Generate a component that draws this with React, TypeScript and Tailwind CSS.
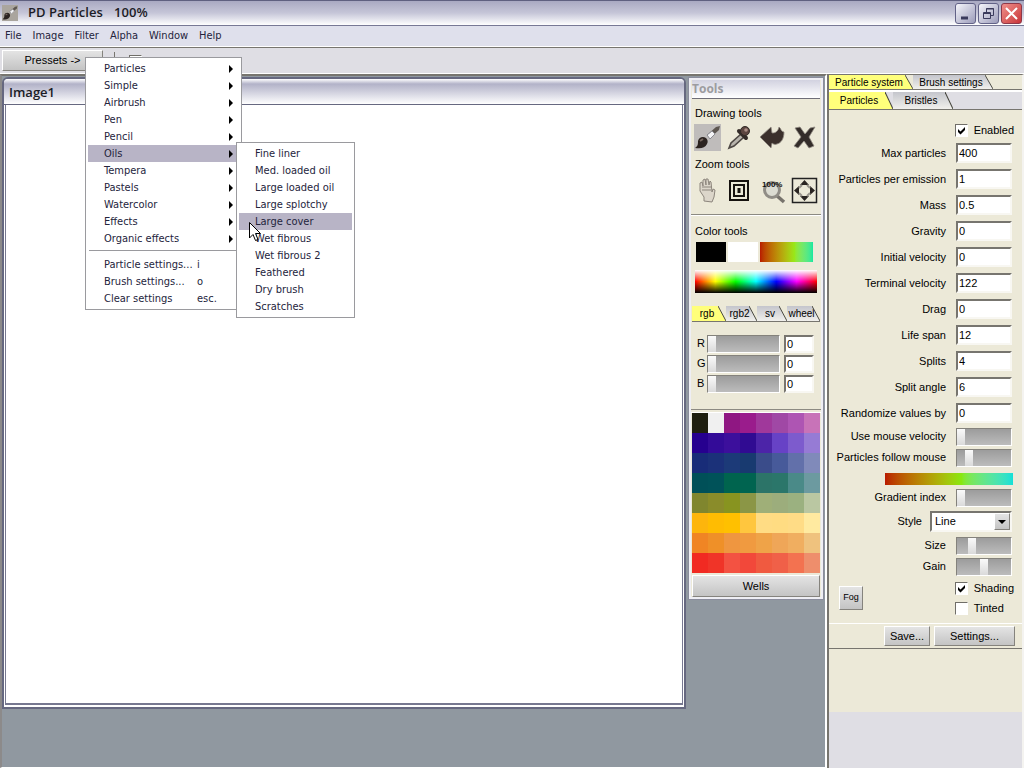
import type { ReactNode } from "react";

type PresetItem = { label: string; active?: boolean };

const presets: PresetItem[] = [
  { label: "Particles" },
  { label: "Simple" },
  { label: "Airbrush" },
  { label: "Pen" },
  { label: "Pencil" },
  { label: "Oils", active: true },
  { label: "Tempera" },
  { label: "Pastels" },
  { label: "Watercolor" },
  { label: "Effects" },
  { label: "Organic effects" },
];

const commands = [
  { label: "Particle settings...", shortcut: "i" },
  { label: "Brush settings...", shortcut: "o" },
  { label: "Clear settings", shortcut: "esc." },
];

const oils: PresetItem[] = [
  { label: "Fine liner" },
  { label: "Med. loaded oil" },
  { label: "Large loaded oil" },
  { label: "Large splotchy" },
  { label: "Large cover", active: true },
  { label: "Wet fibrous" },
  { label: "Wet fibrous 2" },
  { label: "Feathered" },
  { label: "Dry brush" },
  { label: "Scratches" },
];

const wells = [
  ["#1f1f10", "#f0f0f0", "#8f1782", "#9a1c8c", "#a0389b", "#a048a5", "#ae55b3", "#c873b8"],
  ["#26008f", "#330b98", "#3c0f9c", "#300b92", "#4c24a8", "#6742c6", "#7d5bcd", "#967bd5"],
  ["#182c78", "#1b3179", "#1c3a78", "#183a70", "#3a4c8a", "#475a9a", "#6270aa", "#808aba"],
  ["#005058", "#005259", "#00644e", "#006450", "#2c7468", "#2b766a", "#4a8a88", "#6c9aa0"],
  ["#80862e", "#8a8c2a", "#889420", "#8b9646", "#9faf78", "#9cad7c", "#9bb180", "#bac7a2"],
  ["#fdb50c", "#ffbc02", "#ffc000", "#ffc63e", "#ffdc84", "#ffdc82", "#ffdc86", "#ffeaa0"],
  ["#f08524", "#ef9028", "#ef9640", "#f09a40", "#efa348", "#efa658", "#f0ae60", "#efc27e"],
  ["#f12a22", "#f03428", "#f35242", "#f2483a", "#f05a40", "#f06048", "#f37250", "#ee8e6c"],
];

const fields = [
  { label: "Max particles", value: "400" },
  { label: "Particles per emission", value: "1" },
  { label: "Mass", value: "0.5" },
  { label: "Gravity", value: "0" },
  { label: "Initial velocity", value: "0" },
  { label: "Terminal velocity", value: "122" },
  { label: "Drag", value: "0" },
  { label: "Life span", value: "12" },
  { label: "Splits", value: "4" },
  { label: "Split angle", value: "6" },
  { label: "Randomize values by", value: "0" },
];

function Brush() {
  return (
    <svg viewBox="0 0 27 27" className="size-full">
      <path d="M26 2 L22 3 L13 11 L16 14 L25 6 Z" fill="#5d5650" />
      <path d="M18 7 L13 11 L16 15 L21 10 Z" fill="#f4f4f6" stroke="#8a8a90" />
      <path d="M12 14 C9 12 5 13 4 17 C4 20 4 22 1 24 C7 25 11 24 13 20 C14 18 14 16 12 14 Z" fill="#2b2320" />
      <path d="M6 17 L9 15" stroke="#75665e" strokeWidth="2" />
    </svg>
  );
}

function Dropper() {
  return (
    <svg viewBox="0 0 27 27" className="size-full">
      <path d="M15 10 L5 19 L3 24 L8 22 L18 13 Z" fill="#b8b4ac" stroke="#4e4844" strokeWidth="1.6" />
      <path d="M13 7 L20 14" stroke="#332b28" strokeWidth="4" strokeLinecap="round" />
      <circle cx="19" cy="7" r="4.5" fill="#5c4540" stroke="#332b28" />
      <circle cx="20" cy="6" r="1.8" fill="#ab8e86" />
    </svg>
  );
}

function Undo() {
  return (
    <svg viewBox="0 0 27 27" className="size-full">
      <path d="M1 13 L12 3 L13 9 C17 9 19 7 20 3 C22 4 22 8 25 8 C25 15 22 19 18 20 C16 21 14 20 13 19 L12 24 Z" fill="#3b302c" stroke="#8f8981" strokeWidth="0.8" />
    </svg>
  );
}

function Clear() {
  return (
    <svg viewBox="0 0 27 27" className="size-full">
      <path d="M4 4 L9 3 L14 10 L19 4 L24 3 L18 13 L23 22 L18 24 L13 17 L7 24 L3 22 L10 13 Z" fill="#332c29" stroke="#8f8981" strokeWidth="0.8" />
    </svg>
  );
}

function Hand() {
  return (
    <svg viewBox="0 0 27 27" className="size-full" fill="#dcd6ca" stroke="#8c857c">
      <path d="M10 24 L10 20 L6 14 L6 6 L8 5 L9 9 L9 3 L11 2 L12 8 L12 2 L14 2 L15 8 L16 4 L17 5 L18 15 L19 12 L21 13 L20 20 L18 25 Z" />
      <path d="M8 10 H17 M8 13 H17" />
    </svg>
  );
}

function ActualSize() {
  return (
    <svg viewBox="0 0 27 27" className="size-full" fill="none" stroke="#16120f" strokeWidth="2">
      <path d="M4 4 H22 V23 H4 Z M8 8 H18 V19 H8 Z" />
      <path d="M13 11 V16" strokeWidth="3" />
    </svg>
  );
}

function Magnifier() {
  return (
    <svg viewBox="0 0 27 27" className="size-full">
      <path d="M17 18 L25 25" stroke="#77736c" strokeWidth="3.5" />
      <circle cx="13" cy="13" r="7.5" fill="#dcdcd2" stroke="#908d86" strokeWidth="3" />
      <text x="3" y="10" fontFamily="Liberation Sans" fontWeight="700" fontSize="8" fill="#111">
        100%
      </text>
    </svg>
  );
}

function FitWindow() {
  return (
    <svg viewBox="0 0 27 27" className="size-full">
      <rect x="1.5" y="1.5" width="24" height="24" fill="none" stroke="#222" strokeWidth="1.5" />
      <path d="M13.5 3 L18 8 H9 Z M13.5 24 L18 19 H9 Z M3 13.5 L8 9 V18 Z M24 13.5 L19 9 V18 Z" fill="#2a2522" />
      <path d="M8 11 L11 8 M19 11 L16 8 M8 16 L11 19 M19 16 L16 19" stroke="#99958c" strokeWidth="2" />
    </svg>
  );
}

function ToolButton({ label, active, children }: { label: string; active?: boolean; children: ReactNode }) {
  return (
    <button
      aria-label={label}
      className={`size-[27px] ${active ? "bg-[#bfbcbb]" : ""}`}
    >
      {children}
    </button>
  );
}

function Tab({ active, className, children }: { active?: boolean; className: string; children: ReactNode }) {
  return (
    <div className={`relative flex ${className}`}>
      <button
        className={`h-full w-full pt-px pr-1 text-center leading-none whitespace-nowrap [clip-path:polygon(0_0,calc(100%-8px)_0,100%_100%,0_100%)] ${
          active ? "bg-[#ffff7b]" : "bg-linear-to-b from-[#c4c5cc] to-[#f1f0ec]"
        }`}
      >
        {children}
      </button>
      <svg viewBox="0 0 8 16" preserveAspectRatio="none" className="absolute right-0 h-full w-2">
        <path d="M0 0 L8 16" stroke="#44443c" />
      </svg>
    </div>
  );
}

function Slider({ id, value, className }: { id: string; value: number; className: string }) {
  return (
    <input
      id={id}
      type="range"
      defaultValue={value}
      className={`h-[18px] appearance-none border border-t-[#84827c] border-r-white border-b-white border-l-[#84827c] bg-linear-to-b from-[#9c9c9c] to-[#bcbcbc] [&::-webkit-slider-thumb]:h-4 [&::-webkit-slider-thumb]:w-2 [&::-webkit-slider-thumb]:appearance-none [&::-webkit-slider-thumb]:bg-linear-to-b [&::-webkit-slider-thumb]:from-[#fafafa] [&::-webkit-slider-thumb]:to-[#dadada] ${className}`}
    />
  );
}

function CheckBox({ label, checked }: { label: string; checked?: boolean }) {
  return (
    <label className="flex h-5 items-center gap-[6px]">
      <span className="relative flex size-[13px]">
        <input
          type="checkbox"
          defaultChecked={checked}
          className="peer size-[13px] appearance-none border border-t-[#706e68] border-r-white border-b-white border-l-[#706e68] bg-white"
        />
        <svg viewBox="0 0 13 13" className="pointer-events-none absolute inset-0 hidden peer-checked:block">
          <path d="M3 5 L5.5 7.5 L10 3 V6 L5.5 10.5 L3 8 Z" fill="#000" />
        </svg>
      </span>
      {label}
    </label>
  );
}

const inset = "border-2 border-t-[#77756f] border-l-[#77756f] border-r-[#f8f7f2] border-b-[#f8f7f2] bg-white";
const raised = "border border-t-white border-l-white border-r-[#85837d] border-b-[#85837d] bg-linear-to-b from-[#e4e4e4] to-[#c4c4c4]";

function TitleBar() {
  return (
    <header className="flex h-[26px] items-center border-t border-b border-t-[#5f6080] border-b-[#777895] bg-linear-to-b from-[#a9a9c2] via-[#c6c6d8] to-white px-[2px]">
      <span className="size-4 bg-[#aaa59e]">
        <Brush />
      </span>
      <h1 className="ml-[10px] flex-1 font-['Open_Sans','Noto_Sans',sans-serif] text-[13px] font-semibold text-[#1c1c26]">
        PD Particles <span className="ml-2">100%</span>
      </h1>
      <div className="flex gap-[2px]">
        <button aria-label="Minimize" className="size-[21px] rounded-[3px] border border-[#626287] bg-linear-to-br from-[#f6f6fb] to-[#9c9cba]">
          <svg viewBox="0 0 19 19"><path d="M5 14 H12" stroke="#3a3a5c" strokeWidth="3" /></svg>
        </button>
        <button aria-label="Restore" className="size-[21px] rounded-[3px] border border-[#626287] bg-linear-to-br from-[#f6f6fb] to-[#9c9cba]">
          <svg viewBox="0 0 19 19" fill="none" stroke="#3a3a5c">
            <path d="M7.5 8 V4.5 H14.5 V11.5 H12 M7 5 H15 M4.5 8.5 H11.5 V14.5 H4.5 Z M4 9.5 H12" />
          </svg>
        </button>
        <button aria-label="Close" className="size-[21px] rounded-[3px] border border-[#8e3848] bg-linear-to-br from-[#ee8f8c] to-[#c83038]">
          <svg viewBox="0 0 19 19"><path d="M4 4 L15 15 M15 4 L4 15" stroke="#fff" strokeWidth="2" /></svg>
        </button>
      </div>
    </header>
  );
}

function ToolsWindow() {
  return (
    <section className="mt-[2px] flex w-[134px] shrink-0 flex-col self-start border-2 border-[#eeeef4] bg-[#ece9d8] outline outline-[#8a8c9c]">
      <h2 className="mx-px flex h-[19px] items-center border-b border-[#6f6e78] bg-linear-to-b from-[#d2d2e0] to-white font-['Open_Sans','Noto_Sans',sans-serif] text-[12px] font-bold text-[#9c9ca0]">
        Tools
      </h2>
      <div className="border-b border-[#8c8a82] px-[3px] pt-1 pb-[10px]">
        <h3 className="pl-px leading-[21px]">Drawing tools</h3>
        <div className="flex justify-between">
          <ToolButton label="Brush" active><Brush /></ToolButton>
          <ToolButton label="Color picker"><Dropper /></ToolButton>
          <ToolButton label="Undo"><Undo /></ToolButton>
          <ToolButton label="Clear"><Clear /></ToolButton>
        </div>
        <h3 className="pl-px leading-[26px]">Zoom tools</h3>
        <div className="flex justify-between">
          <ToolButton label="Pan"><Hand /></ToolButton>
          <ToolButton label="Actual size"><ActualSize /></ToolButton>
          <ToolButton label="Zoom 100%"><Magnifier /></ToolButton>
          <ToolButton label="Fit window"><FitWindow /></ToolButton>
        </div>
      </div>
      <div className="border-t border-white px-1 pt-1">
        <h3 className="leading-[22px]">Color tools</h3>
        <div className="mr-1 ml-px flex h-5 gap-[2px]">
          <button aria-label="Primary color" className="w-[30px] bg-black" />
          <button aria-label="Secondary color" className="w-[30px] bg-white" />
          <button aria-label="Gradient" className="flex-1 bg-linear-to-r from-[#b81800] via-[#98e818] via-65% to-[#10e8a0]" />
        </div>
        <div className="mt-2 h-[23px] bg-[linear-gradient(to_bottom,#fff_0%,transparent_50%,#000_100%),linear-gradient(to_right,#f00,#ff0,#0f0,#0ff,#00f,#f0f,#f00)]" />
      </div>
      <div className="mx-px mt-[13px] flex h-4 border-b border-[#77756f] text-[10px]">
        <Tab active className="w-[34px]">rgb</Tab>
        <Tab className="w-[31px]">rgb2</Tab>
        <Tab className="w-[30px]">sv</Tab>
        <Tab className="w-[33px]">wheel</Tab>
      </div>
      <div className="border-b border-[#8c8a82] px-[6px] pt-[13px] pb-[14px]">
        {["R", "G", "B"].map((channel) => (
          <div key={channel} className="flex h-5 items-start">
            <label htmlFor={`slider-${channel}`} className="w-[10px] leading-4">{channel}</label>
            <Slider id={`slider-${channel}`} value={0} className="w-[73px]" />
            <input aria-label={`${channel} value`} defaultValue="0" className={`ml-1 h-[18px] w-[30px] pl-px ${inset}`} />
          </div>
        ))}
      </div>
      <div className="mt-[2px] border-t border-white px-px">
        {wells.map((row) => (
          <div key={row[0]} className="grid h-5 grid-cols-8">
            {row.map((color) => (
              <button key={color} aria-label={color} style={{ backgroundColor: color }} />
            ))}
          </div>
        ))}
      </div>
      <button className={`mx-px mt-[2px] h-[22px] ${raised}`}>Wells</button>
    </section>
  );
}

function SettingsRow({ id, label, className, children }: { id: string; label: string; className: string; children: ReactNode }) {
  return (
    <div className={`flex items-center justify-end gap-[10px] pr-[10px] ${className}`}>
      <label htmlFor={id}>{label}</label>
      {children}
    </div>
  );
}

function SettingsPanel() {
  return (
    <aside className="flex w-[197px] shrink-0 flex-col border-t border-r-2 border-l-2 border-t-[#77756f] border-r-[#f4f3f0] border-l-[#77756f] bg-[#dfdee4]">
      <div className="flex h-[15px] border-b border-[#77756f] bg-[#ece9d8] text-[10px]">
        <Tab active className="w-[84px]">Particle system</Tab>
        <Tab className="w-[80px]">Brush settings</Tab>
      </div>
      <div className="flex h-5 border-t-2 border-b border-t-white border-b-[#77756f] text-[10px]">
        <Tab active className="w-[64px]">Particles</Tab>
        <Tab className="w-[60px]">Bristles</Tab>
      </div>
      <div className="bg-[#ece9d8] pt-[10px] pb-[63px]">
        <div className="flex justify-end pr-2">
          <CheckBox label="Enabled" checked />
        </div>
        <div>
          {fields.map((field) => (
            <SettingsRow key={field.label} id={field.label} label={field.label} className="h-[26px]">
              <input id={field.label} defaultValue={field.value} className={`-mt-px h-5 w-14 pl-px ${inset}`} />
            </SettingsRow>
          ))}
        </div>
        <SettingsRow id="mouse-velocity" label="Use mouse velocity" className="h-[21px]">
          <Slider id="mouse-velocity" value={0} className="w-14" />
        </SettingsRow>
        <SettingsRow id="follow-mouse" label="Particles follow mouse" className="h-[21px]">
          <Slider id="follow-mouse" value={17} className="w-14" />
        </SettingsRow>
        <div className="mt-[5px] mr-[9px] ml-auto h-3 w-32 bg-linear-to-r from-[#b81800] via-[#88e810] via-60% to-[#10e0d8]" />
        <SettingsRow id="gradient-index" label="Gradient index" className="mt-[2px] h-[21px]">
          <Slider id="gradient-index" value={0} className="w-14" />
        </SettingsRow>
        <SettingsRow id="style" label="Style" className="h-[27px]">
          <span className="relative -ml-[2px] flex">
            <select id="style" className={`h-[21px] w-[82px] appearance-none pl-[3px] ${inset}`}>
              <option>Line</option>
            </select>
            <span className={`pointer-events-none absolute top-[2px] right-[2px] flex h-[17px] w-4 items-center justify-center ${raised}`}>
              <svg viewBox="0 0 8 4" className="w-2"><path d="M0 0 H8 L4 4 Z" /></svg>
            </span>
          </span>
        </SettingsRow>
        <SettingsRow id="size" label="Size" className="h-[21px]">
          <Slider id="size" value={24} className="w-14" />
        </SettingsRow>
        <SettingsRow id="gain" label="Gain" className="h-[21px]">
          <Slider id="gain" value={50} className="w-14" />
        </SettingsRow>
        <div className="flex items-center justify-between border-b border-white pt-px pr-2 pb-[5px] pl-[10px]">
          <button className={`size-6 text-[9px] ${raised}`}>Fog</button>
          <div>
            <CheckBox label="Shading" checked />
            <CheckBox label="Tinted" />
          </div>
        </div>
        <div className="flex justify-end gap-1 border-b border-[#77756f] py-[2px] pr-[7px]">
          <button className={`h-5 w-[46px] ${raised}`}>Save...</button>
          <button className={`h-5 w-[81px] ${raised}`}>Settings...</button>
        </div>
      </div>
    </aside>
  );
}

const menuRow = "flex h-[17px] w-full items-center pt-[2px] text-left";

function PresetMenu() {
  return (
    <nav className="absolute top-[57px] left-[85px] w-[157px] border border-[#9a9a9e] bg-white p-[2px] font-['DejaVu_Sans_Condensed','DejaVu_Sans',sans-serif] text-[11px] text-[#24243c]">
      {presets.map((item) => (
        <button key={item.label} className={`${menuRow} pr-[6px] pl-4 ${item.active ? "bg-[#b8b4c6]" : ""}`}>
          <span className="flex-1">{item.label}</span>
          <svg viewBox="0 0 4 8" className="mb-[2px] h-2 w-1"><path d="M0 0 L4 4 L0 8 Z" fill="#000" /></svg>
        </button>
      ))}
      <hr className="mx-px mt-[3px] mb-[5px] border-[#9a9a9e]" />
      {commands.map((item) => (
        <button key={item.label} className={`${menuRow} pl-4`}>
          <span className="w-[93px] whitespace-nowrap">{item.label}</span>
          <span>{item.shortcut}</span>
        </button>
      ))}
      <div className="absolute top-[84px] left-[150px] w-[119px] border border-[#9a9a9e] bg-white p-[2px]">
        {oils.map((item) => (
          <button key={item.label} className={`${menuRow} pl-4 ${item.active ? "bg-[#b8b4c6]" : ""}`}>
            {item.label}
          </button>
        ))}
        <svg viewBox="0 0 12 20" className="absolute top-[79px] left-3 h-5 w-3">
          <path d="M0.5 0.5 V16 L4 12.5 L6.5 18.5 L9 17.5 L6.5 11.5 H11.5 Z" fill="#fff" stroke="#000" />
        </svg>
      </div>
    </nav>
  );
}

export default function App() {
  return (
    <div className="relative flex min-h-screen flex-col bg-[#dfdee4] font-['Liberation_Sans',Arial,sans-serif] text-[11px] text-black">
      <TitleBar />
      <nav className="flex h-[21px] items-center gap-[11px] border-b border-white bg-[#dfe0ec] pl-[5px] font-['DejaVu_Sans_Condensed','DejaVu_Sans',sans-serif] text-[#24243c]">
        {["File", "Image", "Filter", "Alpha", "Window", "Help"].map((item) => (
          <button key={item}>{item}</button>
        ))}
      </nav>
      <div className="flex h-[27px] items-start border-t border-b border-t-[#77756f] border-b-white pt-[2px] pl-[2px]">
        <button className={`h-[21px] w-[101px] ${raised}`}>Pressets -&gt;</button>
        <span className="mt-[2px] ml-[11px] h-4 border-l border-[#77756f]" />
        <div className="mt-px ml-[14px]">
          <CheckBox label="Folding" />
        </div>
      </div>
      <div className="flex flex-1">
        <main className="flex flex-1 gap-[3px] border-t-2 border-r-2 border-b border-l-2 border-t-[#77756f] border-r-white border-b-white border-l-[#8c8a8a] bg-[#9098a0] pr-[2px]">
          <section className="mt-px mb-[58px] flex flex-1 flex-col rounded-t-md border-2 border-[#666880] bg-white">
            <h2 className="flex h-[26px] items-center rounded-t border-b border-[#666880] bg-linear-to-b from-white via-[#b2b2c8] via-20% to-white pt-[3px] pl-[5px] font-['Open_Sans','Noto_Sans',sans-serif] text-[13px] font-semibold text-[#1c1c26]">
              Image1
            </h2>
            <div className="mx-px mb-[2px] flex-1 border-x border-b-2 border-[#777890]" />
          </section>
          <ToolsWindow />
        </main>
        <SettingsPanel />
      </div>
      <PresetMenu />
    </div>
  );
}
